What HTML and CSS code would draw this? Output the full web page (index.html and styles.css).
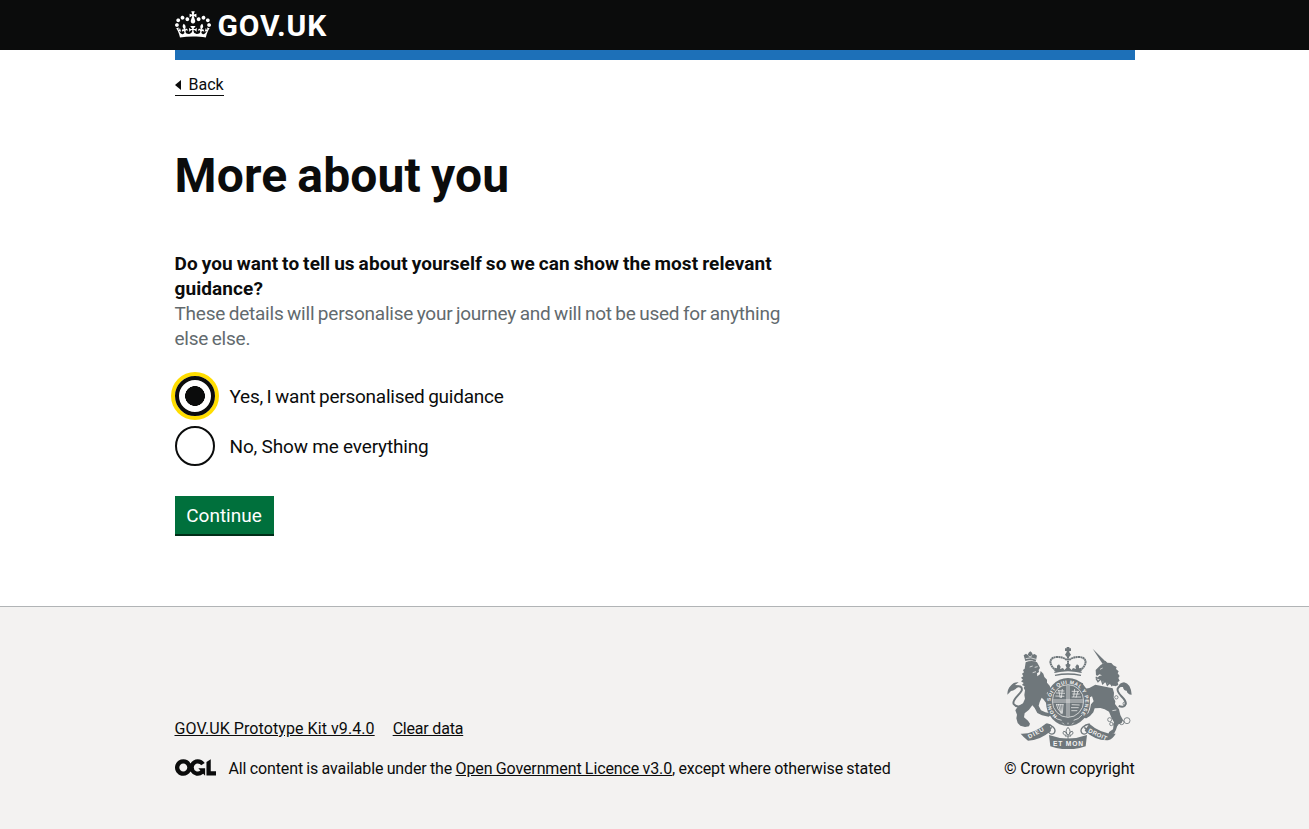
FILE: index.html
```html
<!DOCTYPE html>
<html lang="en">
<head>
<meta charset="utf-8">
<title>More about you</title>
<link rel="stylesheet" href="styles.css">
</head>
<body>
<header class="header">
  <div class="container header-inner">
    <a class="logo" href="#">
      <svg class="crown" viewBox="0 0 132 97" width="36" height="27" fill="currentColor" aria-hidden="true"><path fill-rule="evenodd" d="M25 30.2c3.5 1.5 7.7-.2 9.1-3.7 1.5-3.6-.2-7.8-3.9-9.2-3.6-1.4-7.6.3-9.1 3.9-1.4 3.5.3 7.5 3.9 9zM9 39.5c3.6 1.5 7.8-.2 9.2-3.7 1.5-3.6-.2-7.8-3.9-9.1-3.6-1.5-7.6.2-9.1 3.8-1.4 3.5.3 7.5 3.8 9zM4.4 57.2c3.5 1.5 7.7-.2 9.1-3.8 1.5-3.6-.2-7.7-3.9-9.1-3.5-1.5-7.6.3-9.1 3.8-1.4 3.5.3 7.6 3.9 9.1zm38.3-21.4c3.5 1.5 7.7-.2 9.1-3.8 1.5-3.6-.2-7.7-3.9-9.1-3.6-1.5-7.6.3-9.1 3.8-1.3 3.6.4 7.7 3.9 9.1zm64.4-5.6c-3.6 1.5-7.8-.2-9.1-3.7-1.5-3.6.2-7.8 3.8-9.2 3.6-1.4 7.7.3 9.2 3.9 1.3 3.5-.4 7.5-3.9 9zm15.9 9.3c-3.6 1.5-7.7-.2-9.1-3.7-1.5-3.6.2-7.8 3.7-9.1 3.6-1.5 7.7.2 9.2 3.8 1.5 3.5-.3 7.5-3.8 9zm4.7 17.7c-3.6 1.5-7.8-.2-9.2-3.8-1.5-3.6.2-7.7 3.9-9.1 3.6-1.5 7.7.3 9.2 3.8 1.3 3.5-.4 7.6-3.9 9.1zM89.3 35.8c-3.6 1.5-7.8-.2-9.2-3.8-1.4-3.6.2-7.7 3.9-9.1 3.6-1.5 7.7.3 9.2 3.8 1.4 3.6-.3 7.7-3.9 9.1zM69.7 17.7l8.9 4.7V9.3l-8.9 2.8c-.2-.3-.5-.6-.9-.9L72.4 0H59.6l3.5 11.2c-.3.3-.6.5-.9.9l-8.8-2.8v13.1l8.8-4.7c.3.3.6.7.9.9l-5 15.4v.1c-.2.8-.4 1.6-.4 2.4 0 4.1 3.1 7.5 7 8.1h.2c.3 0 .7.1 1 .1.4 0 .7 0 1-.1h.2c4-.6 7.1-4.1 7.1-8.1 0-.8-.1-1.7-.4-2.4V34l-5.1-15.4c.4-.2.7-.6 1-.9zM66 92.8c16.9 0 32.8 1.1 47.1 3.2 4-16.9 8.9-26.7 14-33.5l-9.6-3.4c1 4.9 1.1 7.2 0 10.2-1.5-1.4-3-4.3-4.2-8.7L108.6 76c2.8-2 5-3.2 7.5-3.3-4.4 9.4-10 11.9-13.6 11.2-4.3-.8-6.3-4.6-5.6-7.9 1-4.7 5.7-5.9 8-.5 4.3-8.7-3-11.4-7.6-8.8 7.1-7.2 7.9-13.5 2.1-21.1-8 6.1-8.1 12.3-4.5 20.8-4.7-5.4-12.1-2.5-9.5 6.2 3.4-5.2 7.9-2 7.2 3.1-.6 4.3-6.4 7.8-13.5 7.2-10.3-.9-10.9-8-11.2-13.8 2.5-.5 7.1 1.8 11 7.3L80.2 60c-4.1 4.4-8 5.3-12.3 5.4 1.4-4.4 8-11.6 8-11.6H55.5s6.4 7.2 7.9 11.6c-4.2-.1-8-1-12.3-5.4l1.4 16.4c3.9-5.5 8.5-7.7 10.9-7.3-.3 5.8-.9 12.8-11.1 13.8-7.2.6-12.9-2.9-13.5-7.2-.7-5 3.8-8.3 7.1-3.1 2.7-8.7-4.6-11.6-9.4-6.2 3.7-8.5 3.6-14.7-4.6-20.8-5.8 7.6-5 13.9 2.2 21.1-4.7-2.6-11.9.1-7.7 8.8 2.3-5.5 7.1-4.2 8.1.5.7 3.3-1.3 7.1-5.7 7.9-3.5.7-9-1.8-13.5-11.2 2.5.1 4.7 1.3 7.5 3.3l-4.7-15.4c-1.2 4.4-2.7 7.2-4.3 8.7-1.1-3-.9-5.3 0-10.2l-9.5 3.4c5 6.9 9.9 16.7 14 33.5 14.8-2.1 30.8-3.2 47.7-3.2z"/></svg>
      <span class="logo-text">GOV.UK</span>
    </a>
  </div>
</header>
<div class="container page">
  <div class="blue-bar"></div>
  <a class="back" href="#"><span class="back-arrow"></span><span class="back-text">Back</span></a>
  <main class="main">
    <h1 class="title">More about you</h1>
    <form class="form">
      <div class="question">Do you want to tell us about yourself so we can show the most relevant guidance?</div>
      <div class="hint">These details will personalise your journey and will not be used for anything else else.</div>
      <div class="radios">
        <label class="radio"><span class="dot dot-on"></span><span class="radio-yes">Yes, I want personalised guidance</span></label>
        <label class="radio"><span class="dot"></span><span class="radio-no">No, Show me everything</span></label>
      </div>
      <button class="button" type="button">Continue</button>
    </form>
  </main>
</div>
<footer class="footer">
  <div class="container footer-inner">
    <div class="footer-meta">
      <div class="footer-links"><a class="kit" href="#">GOV.UK Prototype Kit v9.4.0</a><a class="clear" href="#">Clear data</a></div>
      <div class="licence">
        <svg class="ogl" viewBox="0 0 483.2 195.7" width="41" height="17" fill="currentColor" aria-hidden="true"><path d="M421.5 142.8V.1l-50.7 32.3v161.1h112.4v-50.7zm-122.3-9.6A47.12 47.12 0 0 1 221 97.8c0-26 21.1-47.1 47.1-47.1 16.7 0 31.4 8.7 39.7 21.8l42.7-27.2A97.63 97.63 0 0 0 268.1 0c-36.5 0-68.3 20.1-85.1 49.7A98 98 0 0 0 97.8 0C43.9 0 0 43.9 0 97.8s43.9 97.8 97.8 97.8c36.5 0 68.3-20.1 85.1-49.7a97.76 97.76 0 0 0 149.6 25.4l19.4 22.2h3v-87.8h-80l24.3 27.5zM97.8 145c-26 0-47.1-21.1-47.1-47.1s21.1-47.1 47.1-47.1 47.1 21.1 47.1 47.1S123.8 145 97.8 145"/></svg>
        <span class="licence-text">All content is available under the <a class="ogl-link" href="#">Open Government Licence v3.0</a>, except where otherwise stated</span>
      </div>
    </div>
    <div class="copyright">
      <svg class="crest" viewBox="36 36 375 306" width="125" height="102" aria-hidden="true">
        <defs><path id="garter" d="M187 243A52 54 0 1 1 251 243"/></defs>
        <!-- Lion with crown and tail -->
        <path class="ink" d="M91 78l-5-17 7-5 5 4 3-7 5-4 5 4 2 6 6-2 7 5-4 18q-17-7-31-2z"/>
        <path class="cut" d="M92 71q15-6 31 2M100 62l5 4 6-4"/>
        <path class="ink" d="M92 82q17-8 34 0l5 9 4 8-4 6 1 6-6 4 1 9 8-6 2-10 8 8 3 10 8 8 0 9 8 9 4 10 2 10-5 5-5-7-5 4 5 14 7 8 1 15 4 8-5 7-9-9-4-12-9-12-5-5-6 13-3 11 7 14 13 6 11 2 5 7-6 4-20-4-14-7-8-15-7-8-10 13-13 11-2 12 12 10 6 9-3 8-12 2-14-4-8-8-4-14 2-11-5-13 6-9 8-7 9-5 6-14-2-11 2-14-4-7 3-5-8-4 5-6-8-5 6-5-6-6 7-4-4-8 6-4-3-7 5-4z"/>
        <path class="line thick" d="M76 214q-14 2-20-7c-6-14 17-26 24-40q3-13-10-13-12 0-18 8"/>
        <path class="ink" d="M37 179q0-17 10-27 9-11 24-10l-11 8 12 2-10 10q-8 6-14 6z"/>
        <path class="cut" d="M104 96l9-3M119 97l9-2M113 113l10-3"/>
        <!-- Unicorn with collar, chain and tail -->
        <path class="ink" d="M293 41l40 40-10 6z"/>
        <path class="ink" d="M302 105l15-15 11-7 3-6 6 6 12 1 6 7 10 5-2 6 8 7-3 6 6 8-4 6 4 8-6 5 2 8-9 4-54-24 5-7 9-2-8-3-5 4-5-1z"/>
        <path class="line" d="M302 126q27 17 56 25M303 130l6 10 9-9 5 15 9-9 5 14 9-9 5 12"/>
        <path class="ink" d="M301 149l52 11 4 13-1 16 5 10-1 8 12 16 4 17 8 15-4 9-12 5-5 15-6 12-16 2 1-7 12-8 3-21-7-12-8-20-13-7-13-4-17 1-4 12-10 11-11 7-9-1 3-7 12-8 5-11 3-15 8-9-5-15-6 3-4 20-6 6-8-3 7-7-1-19-9-5-13-5-5 4-5-8 8-6 7 5 5-2-2-10-8-8 5-7 8 3 1 7 6 9 12-2z"/>
        <path class="line thick" d="M371 213q20 7 21-9c1-15-29-27-24-43q4-9 14-9 10 1 14 10"/>
        <path class="ink" d="M370 155q4-12 17-13 20 3 23 37-13-1-15-12-10 0-11-11-8-4-14-1z"/>
        <path class="cut" d="M315 103l8-4M358 190l6 5M352 227l12-2"/>
        <g class="link"><circle cx="344" cy="254" r="6"/><circle cx="349" cy="267" r="5"/><circle cx="362" cy="268" r="6"/><circle cx="380" cy="262" r="7"/><circle cx="396" cy="257" r="9"/><circle cx="364" cy="187" r="5"/><circle cx="389" cy="206" r="5"/></g>
        <!-- Royal crown -->
        <path class="ink" d="M215 51v-3h-5v-8h5v-4h8v4h5v8h-5v4l5 7-5 6h-8l-5-6z"/>
        <path class="beads" d="M183 107c-27-23-18-41 4-41q18 0 29 9M255 107c27-23 18-41-4-41q-18 0-29 9M219 63v28"/>
        <path class="line" d="M180 121q39-8 78 0M178 112q41-10 82 0"/>
        <path class="ink" d="M182 112l-4-14 8 2 0-8 6-4 5 7-2 7 9-3 4 6 7-7-4-9 8-4 8 4-4 9 7 7 4-6 9 3-2-7 5-7 6 4 0 8 8-2-4 14q-37-9-74 0z"/>
        <!-- Garter and quartered shield -->
        <ellipse class="ink" cx="219" cy="201" rx="66" ry="72"/>
        <ellipse class="cut" cx="219" cy="198" rx="47" ry="49"/>
        <text class="motto"><textPath href="#garter" textLength="254">HONI SOIT QUI MAL Y PENSE</textPath></text>
        <path class="cut" d="M216 151v94M222 151v94M174 195h90M174 201h90M188 167l20 1M183 174l27 1M181 183l27 1M230 169h22M232 177h22M230 186h28M184 207q3 17 13 25M190 207l8 29M197 208l3 28M204 208l-2 28M184 209h22M230 209l24 1M228 218h23M229 227h18M191 165l5 24M202 162l-3 27M239 162l-3 24M249 168l-6 20"/>
        <path class="cut" d="M176 244q10 10 24 12M236 256q15-3 25-16M202 263l5 5M219 263v5M236 263l-5 5"/>
        <!-- Scroll and fleur-de-lis -->
        <path class="ink" d="M77 296q38 2 75-30l12 1 4 21q-35 29-69 29-13-10-22-21zM283 266q34 31 79 30-8 15-23 20-36 2-70-29z"/>
        <path class="line" d="M154 267q12 1 21 10 9 9 2 18-8 6-16-3-1-8 9-15M284 267q-12 1-21 10-9 9-2 18 8 6 16-3 1-8-9-15"/>
        <path class="ink" d="M162 300q57 21 114 0l-4 34q-53 18-106 0z"/>
        <text class="scroll" transform="translate(103 311) rotate(-28)" textLength="51">DIEU</text>
        <text class="scroll" transform="translate(278 291) rotate(25)" textLength="60">DROIT</text>
        <text class="scroll scroll-wide" x="174" y="334" textLength="90">ET MON</text>
        <path class="line fine" d="M219 277q12 12 1 24-13-12-1-24M213 301q-13-3-7-12 6-2 10 10M225 301q13-3 7-12-6-2-10 10M210 303h18M219 303v10"/>
      </svg>
      <span class="copyright-text">© Crown copyright</span>
    </div>
  </div>
</footer>
</body>
</html>
```
FILE: styles.css
```css
* { box-sizing: border-box; }
body { margin: 0; min-height: 829px; display: flex; flex-direction: column; background: #fff; color: #0b0c0c; font-family: Roboto, "Liberation Sans", sans-serif; font-size: 19px; line-height: 25px; }
a { color: inherit; }
.container { width: 960px; margin: 0 auto; }
.header { height: 50px; background: #0b0c0c; color: #fff; }
.header-inner { padding-top: 10px; }
.logo { display: flex; gap: 7px; height: 30px; text-decoration: none; }
.crown { margin-top: 1px; }
.logo-text { font-size: 30px; line-height: 31px; font-weight: 700; letter-spacing: .8px; }
.blue-bar { height: 10px; background: #1d70b8; }
.page { height: 556px; }
.back { display: inline-flex; align-items: center; gap: 8px; height: 21px; margin-top: 15px; border-bottom: 1px solid #0b0c0c; font-size: 16px; line-height: 20px; text-decoration: none; }
.back-arrow { border: solid transparent; border-width: 5px 6px 5px 0; border-right-color: #0b0c0c; }
.main { width: 630px; padding-top: 55px; }
.title { margin: 0 0 50px; font-size: 48px; line-height: 50px; font-weight: 700; letter-spacing: .15px; word-spacing: -2px; }
.question { font-weight: 700; letter-spacing: .09px; word-spacing: -.9px; }
.hint { color: #626a6e; letter-spacing: -.23px; word-spacing: -.9px; }
.radios { display: grid; gap: 10px; margin-top: 25px; }
.radio { display: flex; align-items: center; gap: 15px; height: 40px; }
.radio-yes { letter-spacing: -.24px; word-spacing: -.9px; }
.radio-no { letter-spacing: -.17px; word-spacing: -.1px; }
.dot { width: 40px; height: 40px; border: 2px solid #0b0c0c; border-radius: 50%; }
.dot-on { border-width: 4px; box-shadow: 0 0 0 4px #fd0; background: radial-gradient(circle, #0b0c0c 9.6px, #fff 10.2px); }
.button { display: block; width: 99px; height: 38px; margin: 30px 0 0; padding: 0; border: 0; background: #00703c; box-shadow: 0 2px 0 #002d18; color: #fff; font: inherit; }
.footer { flex: 1; border-top: 1px solid #b1b4b6; background: #f3f2f1; font-size: 16px; line-height: 20px; }
.footer-inner { display: flex; justify-content: space-between; align-items: flex-end; padding-top: 40px; }
.footer-links { display: flex; gap: 18px; margin-bottom: 20px; }
.kit { letter-spacing: .08px; }
.clear { letter-spacing: -.2px; }
.licence { display: flex; gap: 13px; }
.licence-text { letter-spacing: -.12px; word-spacing: -.5px; }
.ogl-link { letter-spacing: -.11px; }
.copyright { display: flex; flex-direction: column; align-items: flex-end; gap: 10px; }
.copyright-text { letter-spacing: -.12px; }
.crest { margin-right: 3px; }
.ink { fill: #6f777b; }
.line, .beads, .link { fill: none; stroke: #6f777b; stroke-width: 4; }
.link { stroke-width: 2.5; }
.fine { stroke-width: 3; }
.thick { stroke-width: 6; }
.beads { stroke-width: 6; stroke-dasharray: 6 1; }
.cut { fill: none; stroke: #f3f2f1; stroke-width: 2.2; }
.motto, .scroll { fill: #f3f2f1; font: bold 15px "Liberation Sans", sans-serif; }
.scroll { font-size: 18px; }
.scroll-wide { font-size: 20px; }
```
